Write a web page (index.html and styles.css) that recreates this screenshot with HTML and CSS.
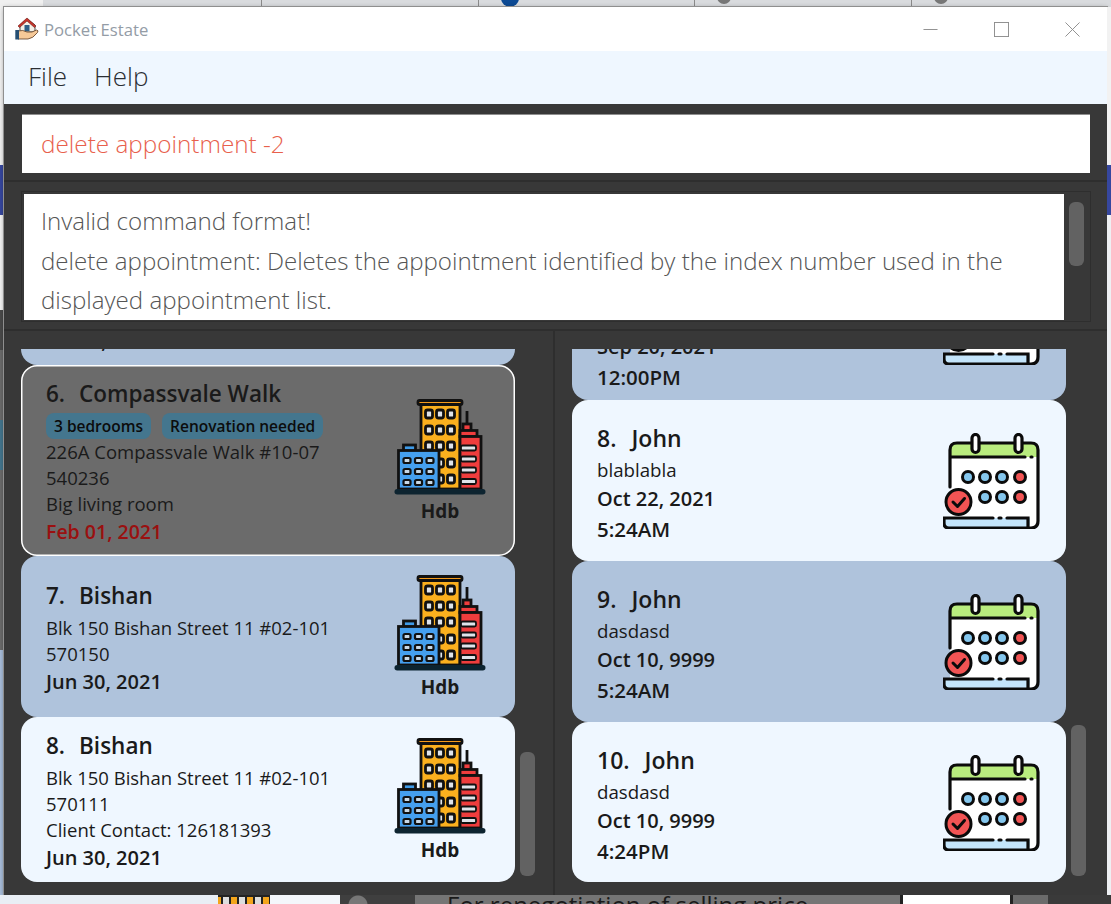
FILE: index.html
```html
<!DOCTYPE html>
<html lang="en">
<head>
    <meta charset="utf-8">
    <title>Pocket Estate</title>
    <link rel="stylesheet" href="styles.css">
</head>
<body>

<svg class="defs" width="0" height="0">
    <symbol id="icon-building" viewBox="0 0 92 96">
        <g stroke="#111" stroke-width="2.8">
            <rect x="27" y="5" width="39" height="85" fill="#fbb01e"/>
            <rect x="24" y="1.5" width="44" height="4" rx="1.5" fill="#f39a1c"/>
            <g fill="#dfe4ea">
                <rect x="31.5" y="11" width="7" height="8" rx="2"/><rect x="42.5" y="11" width="7" height="8" rx="2"/><rect x="53.5" y="11" width="7" height="8" rx="2"/>
                <rect x="31.5" y="27" width="7" height="8" rx="2"/><rect x="42.5" y="27" width="7" height="8" rx="2"/><rect x="53.5" y="27" width="7" height="8" rx="2"/>
                <rect x="31.5" y="43" width="7" height="8" rx="2"/><rect x="42.5" y="43" width="7" height="8" rx="2"/><rect x="53.5" y="43" width="7" height="8" rx="2"/>
                <rect x="42.5" y="60" width="7" height="8" rx="2"/><rect x="53.5" y="60" width="7" height="8" rx="2"/>
                <rect x="42.5" y="76" width="7" height="8" rx="2"/><rect x="53.5" y="76" width="7" height="8" rx="2"/>
            </g>
            <path d="M73 12V26" fill="none"/>
            <rect x="69" y="25" width="8" height="7" fill="#ef3d3d"/>
            <rect x="66" y="31.5" width="17" height="6" fill="#ef3d3d"/>
            <rect x="66" y="37.5" width="21" height="52.5" fill="#ef3d3d"/>
            <g fill="#dfe4ea" stroke-width="1.8">
                <rect x="67" y="46.5" width="15" height="5" rx="1.5"/><rect x="67" y="57.5" width="15" height="5" rx="1.5"/>
                <rect x="67" y="68.5" width="15" height="5" rx="1.5"/><rect x="67" y="80" width="15" height="5" rx="1.5"/>
            </g>
            <rect x="9.5" y="46" width="12" height="6" fill="#3f9be8"/>
            <rect x="4.5" y="51.5" width="40.5" height="38.5" fill="#459fee"/>
            <g fill="#c8d8e6" stroke-width="2.2">
                <rect x="9.5" y="59" width="7" height="5" rx="1.5"/><rect x="21" y="59" width="7" height="5" rx="1.5"/><rect x="32.5" y="59" width="7" height="5" rx="1.5"/>
                <rect x="9.5" y="70" width="7" height="5" rx="1.5"/><rect x="21" y="70" width="7" height="5" rx="1.5"/><rect x="32.5" y="70" width="7" height="5" rx="1.5"/>
                <rect x="9.5" y="81" width="7" height="5" rx="1.5"/><rect x="21" y="81" width="7" height="5" rx="1.5"/><rect x="32.5" y="81" width="7" height="5" rx="1.5"/>
            </g>
        </g>
        <rect x="0.5" y="90" width="91" height="5.5" rx="2.7" fill="#0d2430"/>
    </symbol>
    <symbol id="icon-calendar" viewBox="0 0 97 96">
        <path d="M7 24V17Q7 10 14 10H88Q95 10 95 17V24Z" fill="#b9ec7e"/>
        <rect x="7" y="24" width="88" height="70" fill="#fff"/>
        <path d="M0 85H87V90Q87 95 82 95H5Q0 95 0 90Z" fill="#c4e5fb"/>
        <g fill="none" stroke="#0b0b0b" stroke-width="3.2" stroke-linecap="round">
            <path d="M7 54V17Q7 10 14 10H88Q95 10 95 17V88Q95 95 88 95H6Q1 95 1 90V85H50M56 85H58M64 85H85V94"/>
            <path d="M8 24H82M88 24H89"/>
            <rect x="29" y="1.5" width="7" height="18" rx="3.5" fill="#fff"/>
            <rect x="72" y="1.5" width="7" height="18" rx="3.5" fill="#fff"/>
        </g>
        <g stroke="#0b0b0b" stroke-width="3">
            <g fill="#85c7ee">
                <circle cx="25" cy="44" r="5.5"/><circle cx="42" cy="44" r="5.5"/><circle cx="59" cy="44" r="5.5"/>
                <circle cx="42" cy="64" r="5.5"/><circle cx="59" cy="64" r="5.5"/>
            </g>
            <g fill="#f25454">
                <circle cx="77" cy="44" r="5.5"/><circle cx="77" cy="64" r="5.5"/>
                <circle cx="15.5" cy="69" r="12.5"/>
            </g>
        </g>
        <path d="M10 69L14.5 73.5L21.5 65.5" fill="none" stroke="#0b0b0b" stroke-width="3" stroke-linecap="round" stroke-linejoin="round"/>
    </symbol>
</svg>

<div class="bg-top">
    <span class="bg-tab bg-tab-first"></span>
    <span class="bg-tab bg-tab-a"></span>
    <span class="bg-tab"></span>
    <span class="bg-tab"><i class="bg-dot bg-dot-blue"></i></span>
    <span class="bg-tab"><i class="bg-dot"></i></span>
    <span class="bg-tab bg-tab-last"><i class="bg-dot"></i></span>
</div>

<div class="bg-left">
    <span class="seg-light"></span>
    <span class="seg-blue"></span>
    <span class="seg-white"></span>
    <span class="seg-dark"></span>
    <span class="seg-grey"></span>
    <span class="seg-teal"></span>
    <span class="seg-grey-b"></span>
    <span class="seg-steel"></span>
</div>

<div class="window">
    <div class="titlebar">
        <svg class="app-icon" viewBox="0 0 24 24">
            <path d="M5 13V8L12 2L20 8V15H5Z" fill="#f4f0e6" stroke="#222" stroke-width="0.8"/>
            <path d="M3 9L12 1L21 9L19.5 10.5L12 4L4.5 10.5Z" fill="#c9352b" stroke="#6a1d18" stroke-width="0.6"/>
            <rect x="9.5" y="8" width="5" height="6" fill="#2f5f86"/>
            <path d="M3 14Q8 12.5 12 15H17L21.5 13Q24 13.5 22.5 15.5Q18 21.5 13 22H3Z" fill="#f6c998" stroke="#5a3a22" stroke-width="0.8"/>
            <rect x="0.3" y="13" width="3.7" height="9.5" fill="#264f73"/>
        </svg>
        <span class="app-name">Pocket Estate</span>
        <div class="win-controls">
            <svg class="win-btn" viewBox="0 0 16 16"><path d="M0.5 8H15.5"/></svg>
            <svg class="win-btn" viewBox="0 0 16 16"><rect x="0.5" y="0.5" width="15" height="15"/></svg>
            <svg class="win-btn" viewBox="0 0 16 16"><path d="M0.5 0.5L15.5 15.5M15.5 0.5L0.5 15.5"/></svg>
        </div>
    </div>

    <div class="menubar">
        <span>File</span>
        <span>Help</span>
    </div>

    <div class="command-box">
        <div class="command-input">delete appointment -2</div>
    </div>

    <div class="result-box">
        <div class="result-pane">
            <div class="result-text">
                Invalid command format!<br>
                delete appointment: Deletes the appointment identified by the index number used in the<br>
                displayed appointment list.
            </div>
            <div class="result-track"><div class="result-thumb"></div></div>
        </div>
    </div>

    <div class="lists">
        <div class="list-col list-left">
            <div class="list">
                <div class="card card-odd card-cut">
                    <div class="card-text">
                        <div class="date">Mar 1, 2021</div>
                    </div>
                </div>
                <div class="card card-selected">
                    <div class="card-text">
                        <div class="title"><span class="num">6.</span>Compassvale Walk</div>
                        <div class="tags"><span class="tag">3 bedrooms</span><span class="tag">Renovation needed</span></div>
                        <div class="line">226A Compassvale Walk #10-07</div>
                        <div class="line">540236</div>
                        <div class="line">Big living room</div>
                        <div class="date date-past">Feb 01, 2021</div>
                    </div>
                    <div class="prop-type">
                        <svg class="icon-building"><use href="#icon-building"/></svg>
                        <span>Hdb</span>
                    </div>
                </div>
                <div class="card card-odd">
                    <div class="card-text">
                        <div class="title"><span class="num">7.</span>Bishan</div>
                        <div class="line">Blk 150 Bishan Street 11 #02-101</div>
                        <div class="line">570150</div>
                        <div class="date">Jun 30, 2021</div>
                    </div>
                    <div class="prop-type">
                        <svg class="icon-building"><use href="#icon-building"/></svg>
                        <span>Hdb</span>
                    </div>
                </div>
                <div class="card card-even">
                    <div class="card-text">
                        <div class="title"><span class="num">8.</span>Bishan</div>
                        <div class="line">Blk 150 Bishan Street 11 #02-101</div>
                        <div class="line">570111</div>
                        <div class="line">Client Contact: 126181393</div>
                        <div class="date">Jun 30, 2021</div>
                    </div>
                    <div class="prop-type">
                        <svg class="icon-building"><use href="#icon-building"/></svg>
                        <span>Hdb</span>
                    </div>
                </div>
            </div>
            <div class="thumb thumb-left"></div>
        </div>

        <div class="list-col list-right">
            <div class="list">
                <div class="card card-odd appt card-cut">
                    <div class="card-text">
                        <div class="appt-date">Sep 20, 2021</div>
                        <div class="appt-time">12:00PM</div>
                    </div>
                    <svg class="icon-calendar"><use href="#icon-calendar"/></svg>
                </div>
                <div class="card card-even appt">
                    <div class="card-text">
                        <div class="title"><span class="num">8.</span>John</div>
                        <div class="line">blablabla</div>
                        <div class="appt-date">Oct 22, 2021</div>
                        <div class="appt-time">5:24AM</div>
                    </div>
                    <svg class="icon-calendar"><use href="#icon-calendar"/></svg>
                </div>
                <div class="card card-odd appt">
                    <div class="card-text">
                        <div class="title"><span class="num">9.</span>John</div>
                        <div class="line">dasdasd</div>
                        <div class="appt-date">Oct 10, 9999</div>
                        <div class="appt-time">5:24AM</div>
                    </div>
                    <svg class="icon-calendar"><use href="#icon-calendar"/></svg>
                </div>
                <div class="card card-even appt">
                    <div class="card-text">
                        <div class="title"><span class="num">10.</span>John</div>
                        <div class="line">dasdasd</div>
                        <div class="appt-date">Oct 10, 9999</div>
                        <div class="appt-time">4:24PM</div>
                    </div>
                    <svg class="icon-calendar"><use href="#icon-calendar"/></svg>
                </div>
            </div>
            <div class="thumb thumb-right"></div>
        </div>
    </div>
</div>

<div class="bg-right">
    <span class="seg-light"></span>
    <span class="seg-blue"></span>
    <span class="seg-pale"></span>
</div>

<div class="bg-bottom">
    <span class="bb-pale"></span>
    <span class="bb-tower"></span>
    <span class="bb-white"></span>
    <span class="bb-dark"></span>
    <span class="bb-note">For renegotiation of selling price</span>
    <span class="bb-white2"></span>
    <span class="bb-dark2"></span>
</div>

</body>
</html>
```

FILE: styles.css
```css
* {
    margin: 0;
    padding: 0;
    box-sizing: border-box;
}

body {
    display: grid;
    grid-template-columns: 4px 1103px 4px;
    grid-template-rows: 7px 888px 9px;
    width: 1111px;
    height: 904px;
    overflow: hidden;
    background-color: #d8dadd;
    font-family: "Open Sans", "Noto Sans", sans-serif;
    color: #1a1a1a;
}

.defs {
    position: absolute;
}

/* what shows behind the window */

.bg-top {
    grid-column: 1 / 4;
    display: flex;
    background-color: #d9dbde;
}

.bg-tab {
    display: flex;
    flex: none;
    width: 216.5px;
    padding-left: 22px;
    border-left: 1px solid #8a8a8a;
    overflow: hidden;
}

.bg-tab-first {
    width: 43px;
    background-color: #f0f0f0;
    border-left: none;
}

.bg-tab-a {
    width: 218px;
    border-left: none;
}

.bg-tab-last {
    flex: 1;
}

.bg-dot {
    width: 14px;
    height: 14px;
    margin-top: -10px;
    border-radius: 50%;
    background-color: #777;
}

.bg-dot-blue {
    width: 18px;
    height: 18px;
    margin-top: -11px;
    background-color: #0d4a94;
}

.bg-left,
.bg-right {
    display: flex;
    flex-direction: column;
}

.bg-left span,
.bg-right span {
    display: block;
}

.seg-light {
    height: 158px;
    background-color: #f2f2f2;
}

.seg-blue {
    height: 50px;
    background-color: #36479f;
}

.seg-white {
    height: 95px;
    background-color: #f4f4f4;
}

.seg-dark {
    height: 40px;
    background-color: #4a4a4a;
}

.seg-grey {
    height: 70px;
    background-color: #6b6b6b;
}

.seg-teal {
    height: 50px;
    background-color: #44768e;
}

.seg-grey-b {
    height: 180px;
    background-color: #6b6b6b;
}

.seg-steel {
    flex: 1;
    background-color: #a9bedb;
}

.seg-pale {
    flex: 1;
    background-color: #eef0f3;
}

.bg-bottom {
    grid-column: 1 / 4;
    display: flex;
    overflow: hidden;
    background-color: #3a3a3a;
}

.bb-pale {
    width: 218px;
    background-color: #e9eef5;
}

.bb-tower {
    width: 52px;
    background-color: #f3a51c;
    background-image: repeating-linear-gradient(90deg, #f3a51c 0 3px, #222 3px 5px, #ddd 5px 11px, #222 11px 13px, #f3a51c 13px 16px);
    border-top: 2px solid #222;
}

.bb-white {
    width: 70px;
    background-color: #f4f7fb;
}

.bb-dark {
    width: 75px;
    background-color: #3f3f3f;
    background-image: radial-gradient(circle at 18px 10px, #777 0 9px, transparent 10px);
}

.bb-note {
    width: 485px;
    padding-left: 32px;
    background-color: #757575;
    color: #1a1a1a;
    font-size: 24px;
    line-height: 20px;
    white-space: nowrap;
}

.bb-white2 {
    width: 110px;
    background-color: #fff;
    border-left: 3px solid #222;
}

.bb-dark2 {
    flex: 1;
    background-color: #3a3a3a;
    background-image: linear-gradient(90deg, #6b6b6b 0 35px, transparent 35px);
    border-left: 3px solid #222;
}

/* window */

.window {
    display: flex;
    flex-direction: column;
    background-color: #383838;
    box-shadow: 0 0 0 1px #8f8f8f, 0 1px 5px rgba(0, 0, 0, 0.4);
    overflow: hidden;
}

.titlebar {
    display: flex;
    align-items: center;
    flex: none;
    height: 44px;
    padding-left: 11px;
    background-color: #fff;
}

.app-icon {
    width: 24px;
    height: 24px;
}

.app-name {
    margin-left: 5px;
    color: #949ca6;
    font-size: 16.7px;
}

.win-controls {
    display: flex;
    gap: 56px;
    margin-left: auto;
    margin-right: 27px;
}

.win-btn {
    width: 15px;
    height: 15px;
    fill: none;
    stroke: #8c8c8c;
    stroke-width: 1;
}

.menubar {
    display: flex;
    align-items: center;
    gap: 27px;
    flex: none;
    height: 53px;
    padding: 0 0 3px 24px;
    background-color: #eff7ff;
    color: #2a2e33;
    font-size: 26px;
    font-weight: 300;
}

.command-box {
    flex: none;
    height: 78px;
    padding: 10px 17px 0 18px;
    border-bottom: 2px solid #2e2e2e;
}

.command-input {
    height: 59px;
    padding-left: 19px;
    background-color: #fff;
    border-top: 1px solid #8f8f8f;
    color: #e8604c;
    font-size: 24.3px;
    font-weight: 300;
    line-height: 58px;
}

.result-box {
    flex: none;
    height: 149px;
    padding: 9px 16px 0 17px;
    border-bottom: 2px solid #2e2e2e;
}

.result-pane {
    display: flex;
    height: 131px;
    padding: 2px 0 0 2px;
    border: 1px solid #2e2e2e;
}

.result-text {
    width: 1040px;
    height: 126px;
    padding: 7px 0 0 17px;
    background-color: #fff;
    color: #555;
    font-size: 24.1px;
    font-weight: 300;
    line-height: 39.5px;
    overflow: hidden;
    white-space: nowrap;
}

.result-track {
    flex: 1;
    padding: 8px 6px 0 5px;
}

.result-thumb {
    height: 64px;
    border-radius: 6px;
    background-color: #626262;
}

.lists {
    display: flex;
    flex: 1;
    min-height: 0;
}

.list-col {
    display: flex;
    align-items: flex-end;
    gap: 5px;
    width: 551px;
    height: 100%;
    padding: 18px 0 13px 17px;
    overflow: hidden;
}

.list-left {
    width: 551px;
    border-right: 2px solid #2e2e2e;
}

.list-right {
    flex: 1;
}

.list {
    display: flex;
    flex-direction: column;
    justify-content: flex-end;
    flex: none;
    width: 494px;
    height: 100%;
    overflow: hidden;
}

.thumb {
    flex: none;
    width: 15px;
    margin-bottom: 6px;
    border-radius: 6px;
    background-color: #626262;
}

.thumb-left {
    height: 124px;
}

.thumb-right {
    height: 151px;
}

/* cards */

.card {
    display: flex;
    align-items: center;
    flex: none;
    min-height: 161px;
    padding: 10px 29px 9px 25px;
    border-radius: 16px;
}

.card-cut {
    align-items: flex-end;
}

.card-odd {
    background-color: #afc3dc;
}

.card-even {
    background-color: #eff7ff;
}

.card-selected {
    background-color: #6b6b6b;
    box-shadow: inset 0 0 0 1.5px #fff;
}

.card-text {
    flex: 1;
    font-size: 18.5px;
    white-space: nowrap;
}

.title {
    font-size: 22.5px;
    font-weight: 600;
    line-height: 38px;
}

.num {
    display: inline-block;
    margin-right: 14px;
}

.line {
    line-height: 26px;
}

.date {
    font-size: 20px;
    font-weight: 600;
    line-height: 30px;
}

.date-past {
    color: #9a1010;
    font-size: 19.5px;
}

.tags {
    display: flex;
    gap: 11px;
}

.tag {
    height: 26px;
    padding: 0 8px;
    border-radius: 8px;
    background-color: #44768e;
    color: #0c0c0c;
    font-size: 15.5px;
    font-weight: 600;
    line-height: 26px;
}

.prop-type {
    display: flex;
    flex-direction: column;
    align-items: center;
    flex: none;
    gap: 3px;
    font-size: 19px;
    font-weight: 700;
    line-height: 26px;
}

.icon-building {
    display: block;
    width: 92px;
    height: 96px;
}

.appt {
    padding-right: 26px;
}

.appt:last-child {
    min-height: 160px;
}

.appt.card-cut {
    min-height: 166px;
}

.appt.card-cut .icon-calendar {
    margin-bottom: 26px;
}

.appt .title {
    font-size: 23px;
}

.appt .num {
    margin-right: 15px;
}

.appt .card-text {
    font-size: 18.7px;
}

.appt-date {
    font-size: 20px;
    font-weight: 600;
    line-height: 32px;
}

.appt-time {
    font-size: 20.5px;
    font-weight: 600;
    line-height: 28px;
}

.icon-calendar {
    flex: none;
    width: 97px;
    height: 96px;
}
```
